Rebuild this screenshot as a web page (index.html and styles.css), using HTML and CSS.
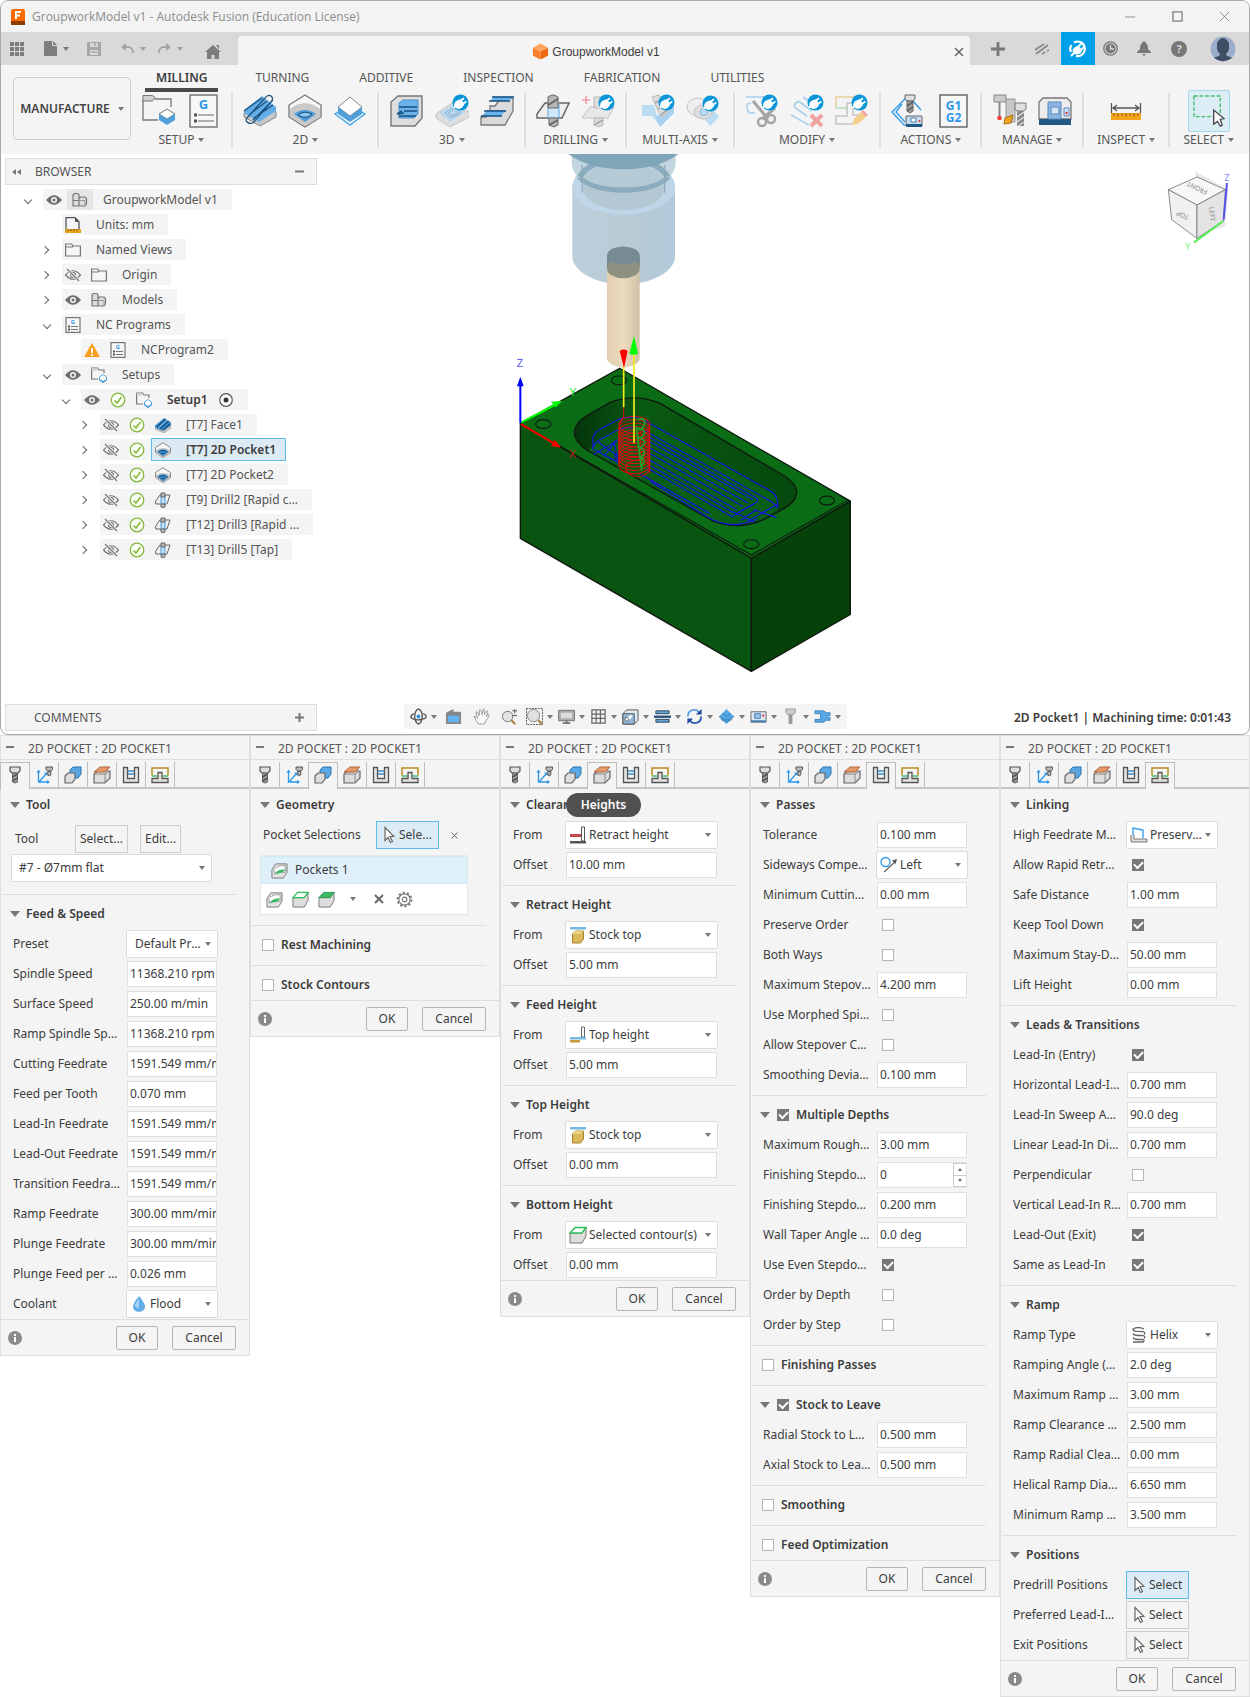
FILE: index.html
```html
<!DOCTYPE html>
<html lang="en">
<head>
<meta charset="utf-8">
<title>GroupworkModel v1 - Autodesk Fusion</title>
<link rel="stylesheet" href="styles.css">
</head>
<body>
<svg class="defs" aria-hidden="true">
  <symbol id="plug" viewBox="0 0 18 18"><circle cx="9" cy="9" r="8.500" fill="#0a96d8"/><g transform="rotate(8 9 9)"><path d="M5 8l6 6q-4 3-7 0-2-3 1-6z" fill="#fff" stroke="#fff"/><path d="M5 8q3-3 5-1.500l2.500 2.500Q14 11 11 14z" fill="#fff"/><path d="M8.500 7.500L12 4M11.500 10.500L15 7" stroke="#fff" stroke-width="1.800"/><path d="M5 13l-2.500 2.500" stroke="#fff" stroke-width="1.800"/></g></symbol>
  <symbol id="cube" viewBox="0 0 18 18"><path d="M1 5l8-4.500 8 4.500-8 4z" fill="#ffa45c"/><path d="M1 5v8.500l8 4V9z" fill="#fd7f2c"/><path d="M17 5v8.500l-8 4V9z" fill="#ee6a10"/></symbol>

  <symbol id="r-setup" viewBox="0 0 34 34"><path d="M1 6V26H16M13 5H29V13" fill="none" stroke="#777" stroke-width="1.300"/><path d="M1 1.500h9.500l2.500 2-2.500 3.500H1z" fill="#d0d0d0" stroke="#777"/><path d="M17 20l8-5 8 5-8 5z" fill="#fff" stroke="#777"/><path d="M17 20v6l8 5 8-5v-6l-8 5z" fill="#4f9fdb"/></symbol>
  <symbol id="r-gcode" viewBox="0 0 34 34"><rect x="3" y="1" width="27" height="32" fill="#f7f7f7" stroke="#666" stroke-width="1.300"/><text x="16.500" y="15" class="g-letter" text-anchor="middle" font-size="13">G</text><path d="M7 21h3M7 27h3" stroke="#555" stroke-width="3"/><path d="M11 21h16M11 27h16" stroke="#666"/></symbol>
  <symbol id="r-face" viewBox="0 0 34 34"><path d="M1 19L18 6l15 12v5L17 32 1 23z" fill="#c8c8c8" stroke="#888"/><path d="M1 16L19 2l14 11v4L16 28 1 19z" fill="#64aee8"/><path d="M4 24L22 4q3-4 6-2t0 6L10 29q-4 1-6-1t0-4M10 26L30 6M1 17L19 4M7 20L24 7M11 24L30 11" fill="none" stroke="#174f7d" stroke-width="1.200"/></symbol>
  <symbol id="r-pocket" viewBox="0 0 34 34"><path d="M17 1l16 10v12L17 33 1 23V11z" fill="#f6f6f6" stroke="#777" stroke-width="1.300"/><path d="M2 15q15-12 30 0v8L17 32 2 23z" fill="#c9c9c9"/><path d="M6 20q11-8 22 0L17 28z" fill="#4c9bd8"/><path d="M10 21q6-5 14-1-6 6-14 1z" fill="#8fc6ee" stroke="#174f7d"/></symbol>
  <symbol id="r-contour" viewBox="0 0 34 34"><path d="M2 20l15-10 15 10-15 11z" fill="none" stroke="#3a9fe8" stroke-width="1.300"/><path d="M5 13L17 3l12 10-12 9z" fill="#fff" stroke="#888"/><path d="M5 13v7l12 8 12-8v-7l-12 9z" fill="#4f9fdb"/></symbol>
  <symbol id="r-adaptive" viewBox="0 0 34 34"><path d="M1 8l7-6h24v22l-7 8H1z" fill="#dedede" stroke="#777" stroke-width="1.400"/><path d="M9 9l4-3h15v14l-4 4H9z" fill="#6ab2ea" stroke="#4c90c6"/><path d="M9 13h18M14 17h13M9 22h17M12 17l-5 3 7-1" stroke="#174f7d" stroke-width="1.500" fill="none"/></symbol>
  <symbol id="r-pocket3d" viewBox="0 0 34 34"><path d="M1 20L20 7l14 11v5L15 33 1 24z" fill="#dedede" stroke="#c2c2c2"/><path d="M4 19L20 9l11 9-16 10z" fill="#bcd8ee"/><path d="M10 19l9-6 7 6-10 5zM13 19l6-4 4 4-6 3z" fill="none" stroke="#8db4d3"/><use href="#plug" x="17" y="0" width="17" height="17"/></symbol>
  <symbol id="r-steps" viewBox="0 0 34 34"><path d="M1 31v-8h5l4-5v-6h5l6-8h12v13l-8 14z" fill="#dadada" stroke="#777" stroke-width="1.300"/><path d="M10 7L14 2.500h19L29 7zM2 22l5-6h19l-5 6z" fill="#6ab2ea"/><path d="M9 7h21M12 3h22M1 22h21M4 17h22" stroke="#174f7d" stroke-width="1.500"/></symbol>
  <symbol id="r-drill" viewBox="0 0 34 34"><path d="M9 9h24L26 24H1v-4z" fill="#eee" stroke="#666" stroke-width="1.500"/><path d="M12 9h11v15H12z" fill="#d3e8f8" stroke="#5aa9e6"/><path d="M12 3q5-4 10 0v11H12zM13 24h9v7l-4 2-5-2z" fill="#b5b5b5" stroke="#666"/><path d="M12 11l10-6M13 31l9-5" stroke="#666" stroke-width="2"/></symbol>
  <symbol id="r-hole" viewBox="0 0 34 34"><path d="M9 13h24l-6 11H1z" fill="#e8e8e8" stroke="#c2c2c2"/><path d="M5 2v8M1 6h8" stroke="#f09aa0" stroke-width="1.500"/><path d="M13 3h9v11h-9zM13 24h9v7l-4 2-5-2z" fill="#dcdcdc" stroke="#bbb"/><path d="M13 31l9-5" stroke="#aaa" stroke-width="2"/><use href="#plug" x="17" y="0" width="17" height="17"/></symbol>
  <symbol id="r-swarf" viewBox="0 0 34 34"><path d="M1 11h12l6 21-8-10H1z" fill="#bcdcf3"/><path d="M15 24l8-11h10v6L19 33z" fill="#a8d0ee"/><path d="M11 3l7-2 9 18-7 4z" fill="#ddd" stroke="#bbb"/><path d="M14 9l7-4M17 15l7-4M20 21l6-5" stroke="#aaa" stroke-width="2"/><use href="#plug" x="17" y="0" width="17" height="17"/></symbol>
  <symbol id="r-multi" viewBox="0 0 34 34"><path d="M14 20l12-6 7 9-9 9z" fill="#bcdcf3"/><ellipse cx="12" cy="13" rx="11" ry="9" fill="#eee" stroke="#c2c2c2"/><ellipse cx="17" cy="18" rx="9" ry="7" fill="#ddd" stroke="#c2c2c2"/><ellipse cx="18" cy="18" rx="4" ry="3.500" fill="#bcdcf3" stroke="#89b8d8"/><use href="#plug" x="16" y="1" width="17" height="17"/></symbol>
  <symbol id="r-trim" viewBox="0 0 34 34"><path d="M1 3h18M6 9q-5 0-4 5t4 5h4" fill="none" stroke="#a9d0ee" stroke-width="1.500"/><path d="M8 7l15 18M30 14L17 25" stroke="#a5a5a5" stroke-width="3"/><circle cx="17" cy="28" r="4" fill="none" stroke="#a5a5a5" stroke-width="2.500"/><circle cx="26" cy="25" r="4" fill="none" stroke="#a5a5a5" stroke-width="2.500"/><use href="#plug" x="16" y="0" width="17" height="17"/></symbol>
  <symbol id="r-delete" viewBox="0 0 34 34"><path d="M13 3l6 4M5 10q3-4 6-1l11 8M1 21l18 10M5 10q-2 3 2 5l10 7" fill="none" stroke="#a9d0ee" stroke-width="1.800"/><path d="M21 21l11 11M32 21L21 32" stroke="#efa3a3" stroke-width="4"/><use href="#plug" x="17" y="0" width="17" height="17"/></symbol>
  <symbol id="r-edit" viewBox="0 0 34 34"><path d="M1 14V3h18" fill="none" stroke="#e3cf9a" stroke-width="1.500"/><path d="M1 14h12" stroke="#abdcb8" stroke-width="1.500"/><path d="M12 18V9h6v12h7M1 30V22h11v-5M1 30h17" fill="none" stroke="#c5c5c5" stroke-width="1.500"/><path d="M17 31l2-6 7-7 5 5-8 7z" fill="#f5cf8a"/><path d="M26 18l2-2 5 5-2 2z" fill="#f1a3a3"/><use href="#plug" x="16" y="0" width="17" height="17"/></symbol>
  <symbol id="r-simulate" viewBox="0 0 34 34"><path d="M15 4L1 18l13 14M22 7l8 9M11 10l-6 8 9 10" fill="none" stroke="#3a9fe8" stroke-width="1.500"/><path d="M14 1h10v4l-2 2h-6l-2-2z" fill="#e0e0e0" stroke="#666"/><path d="M16 7h6v10l-3 2-3-2z" fill="#999" stroke="#666"/><path d="M16 12l6-4M16 17l6-4" stroke="#555" stroke-width="1.500"/><path d="M15 22h16v10H15z" fill="#c6d9ee" stroke="#666"/><path d="M15 30h16v3H15z" fill="#235a85"/><path d="M20 24h5v4h-5z" fill="#fff" stroke="#4780b0"/><circle cx="28.500" cy="27" r="1" fill="#d33"/></symbol>
  <symbol id="r-post" viewBox="0 0 34 34"><rect x="4" y="1" width="27" height="32" fill="#f7f7f7" stroke="#555" stroke-width="1.300"/><text x="17.500" y="16" class="g-letter" text-anchor="middle" font-size="12">G1</text><text x="17.500" y="28" class="g-letter" text-anchor="middle" font-size="12">G2</text></symbol>
  <symbol id="r-tools" viewBox="0 0 34 34"><path d="M1 1h12v7H1z" fill="#ccc" stroke="#888"/><path d="M6.500 8v14" stroke="#888" stroke-width="2"/><circle cx="6.500" cy="24" r="2.300" fill="#ee3b3b"/><path d="M13 5h9v23h-9z" fill="#c7c7c7" stroke="#999"/><path d="M12 24l8-3-2 8-7 1z" fill="#f0a31c" stroke="#a87010"/><path d="M22 9h11v6l-2 2h-7l-2-2z" fill="#ddd" stroke="#777"/><path d="M24 17h7v15h-7z" fill="#888"/><path d="M24 23l7-5M24 28l7-5M25 32l6-4" stroke="#ddd" stroke-width="1.500"/></symbol>
  <symbol id="r-machine" viewBox="0 0 34 34"><path d="M1 8l4-4h24l4 4v17H1z" fill="#ececec" stroke="#777" stroke-width="1.300"/><path d="M1 25h32v6H1z" fill="#235a85"/><path d="M10 8h13v17H10z" fill="#8db6e3" stroke="#5688bb"/><path d="M13 13h8v7h-8z" fill="#d7e4f2" stroke="#5688bb"/><path d="M26 14h5v8h-5z" fill="#cfe2ff" stroke="#5688bb"/><circle cx="28.500" cy="19" r="1.200" fill="#e33"/></symbol>
  <symbol id="r-measure" viewBox="0 0 34 34"><path d="M2.500 9v10M31.500 9v10M4 14h26M8 11l-4 3 4 3M26 11l4 3-4 3" fill="none" stroke="#555" stroke-width="1.300"/><path d="M2 19h30v7H2z" fill="#f2a51d"/><path d="M5 19v3M9 19v4M13 19v3M17 19v4M21 19v3M25 19v4M29 19v3" stroke="#8a5a08"/></symbol>
  <symbol id="r-select" viewBox="0 0 34 34"><rect x="1" y="1" width="28" height="22" fill="none" stroke="#3fbf68" stroke-width="1.500" stroke-dasharray="4 2"/><path d="M22 16v15l4-3 3 5 2-1-2-6 4-1z" fill="#fff" stroke="#444" stroke-width="1.400"/></symbol>

  <symbol id="eye" viewBox="0 0 16 16"><path d="M0 8q8-9.500 16 0-8 9.500-16 0z" fill="#6e6e6e"/><circle cx="8" cy="8" r="3" fill="#f4f4f4"/><circle cx="8" cy="8" r="1.500" fill="#6e6e6e"/></symbol>
  <symbol id="eyeoff" viewBox="0 0 16 16"><path d="M.5 8q7.500-8.500 15 0-7.500 8.500-15 0z" fill="none" stroke="#777" stroke-width="1.200"/><circle cx="8" cy="8" r="2.500" fill="none" stroke="#777" stroke-width="1.200"/><path d="M2 2l12 12" stroke="#f4f4f4" stroke-width="3"/><path d="M2 2l12 12" stroke="#777" stroke-width="1.200"/></symbol>
  <symbol id="folder" viewBox="0 0 16 16"><path d="M.6 2h6l1.500 2H15.400v10H.6zM.6 5h6.500l1-1" fill="#f6f6f6" stroke="#777" stroke-width="1.200"/></symbol>
  <symbol id="parts" viewBox="0 0 16 16"><path d="M1 3l1.500-1.500H6L7 3v5.500H1zM1 8.500h6V14H1zM7 8.500V6.500L8.500 5H13l1.500 1.500V12L13 14H7z" fill="#dcdcdc" stroke="#777" stroke-width="1.200"/><path d="M7 8.500h6v5" fill="none" stroke="#999"/></symbol>
  <symbol id="units" viewBox="0 0 16 16"><path d="M1 12V.7h9l4 4V12" fill="#f3f6fa" stroke="#555" stroke-width="1.300"/><path d="M10 .7v4h4z" fill="#444"/><path d="M0 12h16v4H0z" fill="#e3a41c"/><path d="M3 12v2M6 12v2M9 12v2M12 12v2" stroke="#7a5408"/></symbol>
  <symbol id="ncdoc" viewBox="0 0 16 16"><rect x="1" y=".6" width="14" height="14.800" fill="#f6f6f6" stroke="#777" stroke-width="1.200"/><text x="8" y="7" class="g-letter" text-anchor="middle" font-size="6">G</text><path d="M3 9.500h2M3 12.500h2" stroke="#555" stroke-width="2"/><path d="M6 9.500h7M6 12.500h7" stroke="#777"/></symbol>
  <symbol id="warn" viewBox="0 0 16 16"><path d="M8 1l8 14H0z" fill="#f99d1e"/><path d="M8 6v5M8 12v2" stroke="#fff" stroke-width="1.800"/></symbol>
  <symbol id="setupdir" viewBox="0 0 16 16"><path d="M7 12H.6V1h6l1.500 2H13v3" fill="none" stroke="#777" stroke-width="1.200"/><path d="M.6 1h5.500v2.500H.6z" fill="#ccc"/><path d="M8.500 10l3.500-2.500 3.500 2.500v3L12 15.500 8.500 13z" fill="#fff" stroke="#4f9fdb"/><path d="M8.500 12l3.500 2 3.500-2v1.500L12 16l-3.500-2.500z" fill="#4f9fdb"/></symbol>
  <symbol id="ok" viewBox="0 0 16 16"><circle cx="8" cy="8" r="6.800" fill="#fbfff5" stroke="#86b83e" stroke-width="1.300"/><path d="M4.500 8.500L7 11l4.500-6" fill="none" stroke="#86b83e" stroke-width="1.600"/></symbol>
  <symbol id="target" viewBox="0 0 16 16"><circle cx="8" cy="8" r="6.300" fill="#fff" stroke="#555" stroke-width="1.200"/><circle cx="8" cy="8" r="2.500" fill="#333"/></symbol>
  <symbol id="s-face" viewBox="0 0 16 16"><path d="M0 9.500L8 3l8 5v3l-7 5-9-4z" fill="#c4c4c4" stroke="#999" stroke-width=".6"/><path d="M0 8.500L9 1l7 4.500v3L8 14 0 10.500z" fill="#3a8ccc"/><path d="M2 10L11 2M5 12l9-8M8 13l7-6" stroke="#174f7d" stroke-width="1.200"/><path d="M3.500 10.500L12 3" stroke="#8fc6ee"/></symbol>
  <symbol id="s-pocket" viewBox="0 0 16 16"><path d="M8 .7l7.500 5v5L8 15.500.5 10.500v-5z" fill="#f8f8f8" stroke="#888"/><path d="M1 8q7-4 14 0v3l-7 4-7-4z" fill="#c2c2c2"/><path d="M2.500 9.500q5.500-4.500 11 0L8 14.500z" fill="#3a8ccc"/><path d="M3.500 10.500q4.500-4 9 0M5.500 12q2.500-2 5 0" fill="none" stroke="#174f7d"/></symbol>
  <symbol id="s-drill" viewBox="0 0 16 16"><path d="M5 3h10l-3 9H.7V9z" fill="#f2f2f2" stroke="#666"/><path d="M6 4h4v8H6z" fill="#bfe0f7" stroke="#4f9fdb"/><path d="M6 1h4v4H6zM6 12h4v3l-2 1-2-1z" fill="#b5b5b5" stroke="#666"/></symbol>

  <symbol id="t-tool" viewBox="0 0 18 18"><path d="M4 1h10v4l-2 2H6L4 5z" fill="#ddd" stroke="#555" stroke-width="1.200"/><path d="M6.500 7h5v9l-2.500 1-2.500-1z" fill="#999" stroke="#666"/><path d="M6.500 11l5-3M6.500 15l5-3" stroke="#444" stroke-width="1.300"/></symbol>
  <symbol id="t-axes" viewBox="0 0 18 18"><path d="M3.500 5v11H14M4 16L11 8" fill="none" stroke="#2b96ea" stroke-width="1.300"/><path d="M1.500 6.500l2-3 2 3zM12 14v4l3-2zM9 6.500h3.500V10z" fill="#2b96ea"/><path d="M11 1h6.500v2.500L16 5h-3.500L11 3.500zM12.800 5.500h3V9l-1.500.8-1.500-.8z" fill="#bbb" stroke="#555"/></symbol>
  <symbol id="t-geom" viewBox="0 0 18 18"><path d="M6 4l3-3h8v7l-3 4H6z" fill="#5aa9e6" stroke="#2d74ab"/><path d="M1 10l3-3h7v6l-3 4H1z" fill="#ddd" stroke="#666" stroke-width="1.200"/></symbol>
  <symbol id="t-heights" viewBox="0 0 18 18"><path d="M1 8l4-3h12v7l-5 5H1z" fill="#ddd" stroke="#666" stroke-width="1.200"/><path d="M1 8h11v9M12 8l5-3" fill="none" stroke="#888"/><path d="M1 6l6-5h10l-5 5z" fill="#e59a6c" stroke="#b4663a"/></symbol>
  <symbol id="t-passes" viewBox="0 0 18 18"><path d="M1.500 1.500h4v11h7v-11h4v15h-15z" fill="#e4e4e4" stroke="#555" stroke-width="1.300"/><path d="M6 5h6M6 8h6" stroke="#3a8ccc" stroke-width="1.300"/></symbol>
  <symbol id="t-link" viewBox="0 0 18 18"><path d="M1 9.500V2h16v7.500" fill="none" stroke="#b98b1e" stroke-width="1.500"/><path d="M1 10h5M12 10h5" stroke="#3fbf68" stroke-width="1.500"/><path d="M1 16.500v-4h6V6.500h4v6h6v4z" fill="#e4e4e4" stroke="#555" stroke-width="1.300"/></symbol>

  <symbol id="d-retract" viewBox="0 0 18 18"><path d="M1 8h11v3H1z" fill="#c4484c"/><path d="M1 15h16v2.500H1z" fill="#555"/><path d="M12.500 1h3v14h-3z" fill="#fff" stroke="#555"/></symbol>
  <symbol id="d-stock" viewBox="0 0 18 18"><path d="M1 1h16v2.500H1z" fill="#76b7e6"/><path d="M3.500 8l3-3h8v8l-3 4h-8z" fill="#d9b75a" stroke="#a6822d"/><path d="M3.500 8h8l3-3h-8z" fill="#edd486"/></symbol>
  <symbol id="d-top" viewBox="0 0 18 18"><path d="M12.500 1h3v10h-3z" fill="#fff" stroke="#666"/><path d="M1 11h16v2.500H1z" fill="#76b7e6"/><path d="M1 14h10v2.500H1z" fill="#c49a3a"/></symbol>
  <symbol id="d-contour" viewBox="0 0 18 18"><path d="M1 7h12l4-6v9l-4 7H1z" fill="#ddd" stroke="#777"/><path d="M1 7l5-5.500h11L13 7z" fill="#f8fff9" stroke="#2ebd5a" stroke-width="1.400"/></symbol>
  <symbol id="d-face" viewBox="0 0 18 18"><path d="M1 7h12l4-6v9l-4 7H1z" fill="#ddd" stroke="#777"/><path d="M1 7l5-5.500h11L13 7z" fill="#3cb963" stroke="#2b9a50"/></symbol>
  <symbol id="d-pocket" viewBox="0 0 18 18"><path d="M1 8l4-6h12v9l-4 6H1z" fill="#e2e2e2" stroke="#777"/><path d="M3 8q4-5 12-4v7q-6-2-11 2z" fill="#fff" stroke="#999"/><path d="M4 12q4-5 11-4-3 5-11 4z" fill="#3cb963"/></symbol>
  <symbol id="d-left" viewBox="0 0 18 18"><circle cx="5.500" cy="6" r="4.500" fill="none" stroke="#2b96ea" stroke-width="1.300"/><path d="M4 16L16 5" stroke="#666" stroke-width="1.300"/><path d="M17 3l-5 1.500L15.500 8z" fill="#555"/></symbol>
  <symbol id="d-drop" viewBox="0 0 18 18"><path d="M9 1q6 7 6 11a6 5 0 0 1-12 0Q3 8 9 1z" fill="#64aee8"/><path d="M9 3q-4 6-4 8 1 2 4 2z" fill="#a6d3f5"/></symbol>
  <symbol id="d-preserve" viewBox="0 0 18 18"><path d="M3 12V2l10 2v8" fill="none" stroke="#2b96ea" stroke-width="1.300"/><path d="M1 9v7h16v-3H4V9" fill="#ddd" stroke="#777"/></symbol>
  <symbol id="d-helix" viewBox="0 0 18 18"><path d="M14 3q-6-3-11 0-1 3 10 2.500 3 1 1 3M4 7.500q-3 2 9 2 3 1 1 3M4 11.500q-3 2 9 2 2 1 0 3M3 16h10" fill="none" stroke="#666" stroke-width="1.300"/></symbol>
  <symbol id="cursor" viewBox="0 0 12 18"><path d="M2 1.500v13l3-3 2.500 5 2-1-2.500-5h4z" fill="#fff" stroke="#666" stroke-width="1.200"/></symbol>
  <symbol id="info" viewBox="0 0 14 14"><circle cx="7" cy="7" r="7" fill="#8a8a8a"/><path d="M7 3v2M7 6v5" stroke="#fff" stroke-width="2"/></symbol>
</svg>

<main>
<section class="app">
  <header class="titlebar">
    <svg class="logo" viewBox="0 0 16 18"><path d="M1 3q0-2 2-2h11l1 2v14H1z" fill="#fd6a00"/><path d="M1 13h14v4H1z" fill="#8f3a00"/><path d="M6 11V4h5M6 7.500h4" fill="none" stroke="#fff" stroke-width="2"/></svg>
    <span class="wintitle">GroupworkModel v1 - Autodesk Fusion (Education License)</span>
    <span class="winbtns">
      <button type="button" aria-label="Minimize"><svg viewBox="0 0 12 12"><path d="M0 6.500h11" stroke="#888"/></svg></button>
      <button type="button" aria-label="Maximize"><svg viewBox="0 0 12 12"><rect x="1" y="1" width="10" height="10" fill="none" stroke="#777" stroke-width="1.300"/></svg></button>
      <button type="button" aria-label="Close"><svg viewBox="0 0 12 12"><path d="M1 1l10 10M11 1L1 11" stroke="#888"/></svg></button>
    </span>
  </header>

  <div class="tabbar">
    <div class="quick">
      <button type="button" aria-label="Data panel"><svg width="14" height="14" viewBox="0 0 14 14"><path d="M0 0h4v4H0zM5 0h4v4H5zM10 0h4v4h-4zM0 5h4v4H0zM5 5h4v4H5zM10 5h4v4h-4zM0 10h4v4H0zM5 10h4v4H5zM10 10h4v4h-4z" fill="#7d7d7d"/></svg></button>
      <button type="button" class="withcaret q-file" aria-label="File"><svg width="13" height="15" viewBox="0 0 13 15"><path d="M0 0h8v5h5v10H0z" fill="#7d7d7d"/><path d="M9 0l4 4H9z" fill="#7d7d7d"/></svg><i class="caret"></i></button>
      <button type="button" class="q-save" aria-label="Save"><svg width="14" height="14" viewBox="0 0 14 14"><path d="M0 0h14v14H0z" fill="#a6a6a6"/><path d="M3 1h8v4H3zM3 8h8v5H3z" fill="#d9d9d9"/><path d="M4 10h6M8 1v3" stroke="#a6a6a6" stroke-width="1.500"/></svg></button>
      <button type="button" class="withcaret dim q-undo" aria-label="Undo"><svg width="13" height="12" viewBox="0 0 13 12"><path d="M2 4h6q4 1 4 6" fill="none" stroke="#a6a6a6" stroke-width="1.800"/><path d="M5 0v8L0 4z" fill="#a6a6a6"/></svg><i class="caret"></i></button>
      <button type="button" class="withcaret dim q-redo" aria-label="Redo"><svg width="13" height="12" viewBox="0 0 13 12"><path d="M11 4H5q-4 1-4 6" fill="none" stroke="#a6a6a6" stroke-width="1.800"/><path d="M8 0v8l5-4z" fill="#a6a6a6"/></svg><i class="caret"></i></button>
      <button type="button" class="q-home" aria-label="Home"><svg width="16" height="14" viewBox="0 0 16 14"><path d="M8 0l8 7h-2v7H9.500v-4h-3v4H2V7H0zM11 0h3v4z" fill="#7d7d7d"/></svg></button>
    </div>
    <div class="doctab"><span class="docname"><svg width="17" height="17"><use href="#cube"/></svg>GroupworkModel v1</span><button type="button" aria-label="Close tab"><svg width="10" height="10" viewBox="0 0 10 10"><path d="M1 1l8 8M9 1L1 9" stroke="#666" stroke-width="1.500"/></svg></button></div>
    <div class="account">
      <button type="button" aria-label="New tab"><svg width="14" height="14" viewBox="0 0 14 14"><path d="M7 0v14M0 7h14" stroke="#777" stroke-width="2.800"/></svg></button>
      <button type="button" class="a-ext" aria-label="Extensions"><svg width="16" height="12" viewBox="0 0 16 12"><path d="M1 7l9-6M2 11L14 2M8 11l3-2M13 8l2-1" stroke="#888" stroke-width="1.600"/></svg></button>
      <button type="button" class="a-plug" aria-label="Manage extensions"><svg width="18" height="18" viewBox="0 0 18 18"><path d="M5 2.500A7.300 7.300 0 1 1 7 16M2 12A7 7 0 0 1 2.500 5" fill="none" stroke="#fff" stroke-width="2.200"/><path d="M5 8q3-3 5-1.500l2.500 2.500Q14 11 11 13.500q-4 2-6.500 0-2-3 .5-5.500z" fill="#fff"/><path d="M8.500 7.500L12 4M11.500 10.500L15 7M5 13l-3 3" stroke="#fff" stroke-width="1.800"/></svg></button>
      <button type="button" class="a-clock" aria-label="Job status"><svg width="15" height="15" viewBox="0 0 15 15"><circle cx="7.500" cy="7.500" r="6.700" fill="none" stroke="#777" stroke-width="1.300"/><circle cx="7.500" cy="7.500" r="5" fill="#777"/><path d="M7.500 4v4H11" fill="none" stroke="#d9d9d9" stroke-width="1.400"/></svg></button>
      <button type="button" class="a-bell" aria-label="Notifications"><svg width="14" height="15" viewBox="0 0 14 15"><path d="M7 0l1.500 1.500Q11 3 11 8l3 3v1H0v-1l3-3q0-5 2.500-6.500zM5 13h4l-2 2z" fill="#777"/></svg></button>
      <button type="button" class="a-help" aria-label="Help"><svg width="16" height="16" viewBox="0 0 16 16"><circle cx="8" cy="8" r="8" fill="#777"/><text x="8" y="12" text-anchor="middle" font-size="11" font-weight="700" fill="#d9d9d9">?</text></svg></button>
      <button type="button" class="a-user" aria-label="Account"><svg width="26" height="26" viewBox="0 0 26 26"><circle cx="13" cy="13" r="12.500" fill="#9aaecb"/><path d="M7 7q6-10 12 0v6q-1 4-3 5l1 2q4 1 5 2-9 6.500-18 0 1-1 5-2l1-2q-2-1-3-5z" fill="#3f4f66"/></svg></button>
    </div>
  </div>

  <div class="ribbon">
    <button type="button" class="workspace">MANUFACTURE<i class="caret"></i></button>
    <div class="ribbonmain">
      <nav class="modes"><a href="#" class="on">MILLING</a><a href="#">TURNING</a><a href="#">ADDITIVE</a><a href="#">INSPECTION</a><a href="#">FABRICATION</a><a href="#">UTILITIES</a></nav>
      <div class="groups">
        <div class="group first"><div class="icons"><svg><use href="#r-setup"/></svg><svg><use href="#r-gcode"/></svg></div><button type="button">SETUP<i class="caret"></i></button></div>
        <div class="group"><div class="icons"><svg><use href="#r-face"/></svg><svg><use href="#r-pocket"/></svg><svg><use href="#r-contour"/></svg></div><button type="button">2D<i class="caret"></i></button></div>
        <div class="group"><div class="icons"><svg><use href="#r-adaptive"/></svg><svg><use href="#r-pocket3d"/></svg><svg><use href="#r-steps"/></svg></div><button type="button">3D<i class="caret"></i></button></div>
        <div class="group"><div class="icons"><svg><use href="#r-drill"/></svg><svg><use href="#r-hole"/></svg></div><button type="button">DRILLING<i class="caret"></i></button></div>
        <div class="group wide"><div class="icons"><svg><use href="#r-swarf"/></svg><svg><use href="#r-multi"/></svg></div><button type="button">MULTI-AXIS<i class="caret"></i></button></div>
        <div class="group"><div class="icons"><svg><use href="#r-trim"/></svg><svg><use href="#r-delete"/></svg><svg><use href="#r-edit"/></svg></div><button type="button">MODIFY<i class="caret"></i></button></div>
        <div class="group"><div class="icons"><svg><use href="#r-simulate"/></svg><svg><use href="#r-post"/></svg></div><button type="button">ACTIONS<i class="caret"></i></button></div>
        <div class="group"><div class="icons"><svg><use href="#r-tools"/></svg><svg><use href="#r-machine"/></svg></div><button type="button">MANAGE<i class="caret"></i></button></div>
        <div class="group wide"><div class="icons"><svg><use href="#r-measure"/></svg></div><button type="button">INSPECT<i class="caret"></i></button></div>
        <div class="group wide"><div class="icons"><span class="picked"><svg><use href="#r-select"/></svg></span></div><button type="button">SELECT<i class="caret"></i></button></div>
      </div>
    </div>
  </div>

  <div class="canvas">
    <div class="stage">
      <aside class="browser">
        <div class="bar"><svg width="10" height="8" viewBox="0 0 10 8"><path d="M4 1v6L0 4zM9 1v6L5 4z" fill="#777"/></svg><span>BROWSER</span><button type="button" aria-label="Collapse"><svg width="9" height="9" viewBox="0 0 9 9"><path d="M0 4.500h9" stroke="#777" stroke-width="2"/></svg></button></div>
        <ul class="tree">
          <li class="l0"><i class="chev down"></i><span class="node"><svg><use href="#eye"/></svg><span class="hot"><svg><use href="#parts"/></svg></span><b>GroupworkModel v1</b></span></li>
          <li class="l1"><i class="chev none"></i><span class="node"><svg><use href="#units"/></svg><b>Units: mm</b></span></li>
          <li class="l1"><i class="chev"></i><span class="node"><svg><use href="#folder"/></svg><b>Named Views</b></span></li>
          <li class="l1"><i class="chev"></i><span class="node"><svg><use href="#eyeoff"/></svg><svg><use href="#folder"/></svg><b>Origin</b></span></li>
          <li class="l1"><i class="chev"></i><span class="node"><svg><use href="#eye"/></svg><svg><use href="#parts"/></svg><b>Models</b></span></li>
          <li class="l1"><i class="chev down"></i><span class="node"><svg><use href="#ncdoc"/></svg><b>NC Programs</b></span></li>
          <li class="l2"><i class="chev none"></i><span class="node"><svg><use href="#warn"/></svg><svg><use href="#ncdoc"/></svg><b>NCProgram2</b></span></li>
          <li class="l1"><i class="chev down"></i><span class="node"><svg><use href="#eye"/></svg><svg><use href="#setupdir"/></svg><b>Setups</b></span></li>
          <li class="l2"><i class="chev down"></i><span class="node"><svg><use href="#eye"/></svg><svg><use href="#ok"/></svg><svg><use href="#setupdir"/></svg><b class="strong">Setup1</b><svg><use href="#target"/></svg></span></li>
          <li class="l3"><i class="chev"></i><span class="node"><svg><use href="#eyeoff"/></svg><svg><use href="#ok"/></svg><svg><use href="#s-face"/></svg><b>[T7] Face1</b></span></li>
          <li class="l3"><i class="chev"></i><span class="node"><svg><use href="#eyeoff"/></svg><svg><use href="#ok"/></svg><span class="selected"><svg><use href="#s-pocket"/></svg><b class="strong">[T7] 2D Pocket1</b></span></span></li>
          <li class="l3"><i class="chev"></i><span class="node"><svg><use href="#eyeoff"/></svg><svg><use href="#ok"/></svg><svg><use href="#s-pocket"/></svg><b>[T7] 2D Pocket2</b></span></li>
          <li class="l3"><i class="chev"></i><span class="node"><svg><use href="#eyeoff"/></svg><svg><use href="#ok"/></svg><svg><use href="#s-drill"/></svg><b>[T9] Drill2 [Rapid c...</b></span></li>
          <li class="l3"><i class="chev"></i><span class="node"><svg><use href="#eyeoff"/></svg><svg><use href="#ok"/></svg><svg><use href="#s-drill"/></svg><b>[T12] Drill3 [Rapid ...</b></span></li>
          <li class="l3"><i class="chev"></i><span class="node"><svg><use href="#eyeoff"/></svg><svg><use href="#ok"/></svg><svg><use href="#s-drill"/></svg><b>[T13] Drill5 [Tap]</b></span></li>
        </ul>
      </aside>

      <svg class="scene" viewBox="47 12 1011 1566" role="img" aria-label="Toolpath on the green block">
        <defs>
          <linearGradient id="gShank" x1="0" x2="1" y1="0" y2="0"><stop offset="0" stop-color="#e2cfb2"/><stop offset=".5" stop-color="#ebdabc"/><stop offset="1" stop-color="#cfc0a8"/></linearGradient>
          <linearGradient id="gHolder" x1="0" x2="1" y1="0" y2="0"><stop offset="0" stop-color="#bccfda"/><stop offset=".6" stop-color="#b9cad5"/><stop offset="1" stop-color="#b0cadb"/></linearGradient>
          <linearGradient id="gWall" x1="0" x2="1" y1="0" y2="0"><stop offset="0" stop-color="#04350a"/><stop offset=".3" stop-color="#0a5a13"/><stop offset="1" stop-color="#06480d"/></linearGradient>
        </defs>
        <g transform="scale(1 1.015)">
        <path d="M216 110v203a154 84 0 0 0 308 0V110z" fill="url(#gHolder)"/>
        <ellipse cx="370" cy="108" rx="154" ry="84" fill="#bed6e8"/>
        <ellipse cx="370" cy="108" rx="125" ry="70" fill="#b4c8d3"/>
        <path d="M214 12v26a156 88 0 0 0 312 0V12z" fill="#b4cad6" opacity=".8"/>
        <path d="M230 84q44 42 140 42t140-42l-16-6q-30 32-124 32t-124-32z" fill="#8aacbc"/>
        <path d="M230 78q30-57 140-57t140 57l-18 2q-30-44-122-44T248 80z" fill="#8aacbc"/>
        <path d="M204 12h330q-60 45-164 45T204 12z" fill="#7fa5b8"/>
        <path d="M245 44v82M493 44v82" stroke="#8aa5b2" stroke-width="3"/>
        <path d="M320 312v303a49 27 0 0 0 98 0V312z" fill="url(#gShank)"/>
        <path d="M320 312v40a49 27 0 0 0 98 0v-40z" fill="#8e917f"/>
        <path d="M320 312v34q10-24 49-24t49 24v-34z" fill="#748890"/>
        <ellipse cx="369" cy="312" rx="49" ry="27" fill="#768b94"/>

        <g stroke="#101810" stroke-width="4" stroke-linejoin="round">
          <path d="M60 808L753 1206v335L60 1148z" fill="#085410"/>
          <path d="M753 1206l297-168v335l-297 168z" fill="#054109"/>
          <path d="M60 808L358 645l692 393-297 168z" fill="#0a6d15"/>
          <path d="M66 812L753 1197l290-162" fill="none" stroke-width="3"/>
          <g fill="none" stroke-width="3.500"><ellipse cx="356" cy="681" rx="23" ry="13"/><ellipse cx="129" cy="810" rx="23" ry="13"/><ellipse cx="980" cy="1036" rx="23" ry="13"/><ellipse cx="753" cy="1165" rx="23" ry="13"/></g>
          <path d="M330 746Q400 718 478 748L850 962Q892 988 889 1014 886 1040 850 1060L796 1090Q716 1126 640 1098L262 888Q222 862 222 834 224 806 260 785z" fill="url(#gWall)"/>
        </g>
        <path d="M266 888l376 208q74 26 150-8l38-24 0-40-374-212q-50-20-100 10l-70 38z" fill="#0a5f14"/>
        <g fill="none" stroke="#1414e0" stroke-width="3.500">
          <path d="M278 890v-40q4-16 24-26l54-28q40-14 78 4l380 210q20 12 18 50"/>
          <path d="M278 880q4-16 24-26l54-28q40-14 78 4l380 210q12 8 16 16"/>
          <path d="M448 850l322 180q6 6-6 14l-50 28M448 862l310 172M448 880l296 164M448 896l280 158M448 916l262 148M448 932l252 140M350 916q-14-10 0-20"/>
          <path d="M440 940l260 146M420 958l208 116M450 980l180 110q70 34 140 0"/>
          <path d="M280 900l70-40M290 860l64 46M284 886l70 38M340 860l14 60M350 856l-40 50M720 1096l50-34M700 1080l60-34M740 1098l90-50M760 1064l68 22M700 1070l66 30"/>
        </g>
        <g fill="none" stroke="#e00c14" stroke-width="3">
          <path d="M370 760v26l-12 24M356 815v110M448 815v140"/>
          <ellipse cx="402" cy="812" rx="46" ry="25"/><ellipse cx="402" cy="822" rx="46" ry="25"/><ellipse cx="402" cy="832" rx="46" ry="25"/><ellipse cx="402" cy="842" rx="46" ry="25"/><ellipse cx="402" cy="852" rx="46" ry="25"/><ellipse cx="402" cy="862" rx="46" ry="25"/><ellipse cx="402" cy="872" rx="46" ry="25"/><ellipse cx="402" cy="882" rx="46" ry="25"/><ellipse cx="402" cy="892" rx="46" ry="25"/><ellipse cx="402" cy="902" rx="46" ry="25"/><ellipse cx="402" cy="912" rx="46" ry="25"/><ellipse cx="402" cy="922" rx="46" ry="25"/><ellipse cx="402" cy="932" rx="46" ry="25"/><ellipse cx="412" cy="941" rx="36" ry="24"/>
        </g>
        <path d="M408 796Q440 790 432 812T410 822Q440 826 430 842T414 850Q440 856 430 870T416 880Q438 886 430 900T420 910Q436 916 428 928T424 944L408 820 418 900" fill="none" stroke="#1da32b" stroke-width="5"/>
        <path d="M370 640v120M401 600v266" stroke="#f0ec1c" stroke-width="5"/>
        <path d="M358 594q12-8 24 0l-11 50z" fill="#f00"/><path d="M387 602q13 6 26 0l-12-52z" fill="#0f0"/>
        <path d="M62 806L170 750" stroke="#0f0" stroke-width="6"/><path d="M152 744l34-2-20 18z" fill="#0f0"/>
        <path d="M60 806V690" stroke="#00f" stroke-width="6"/><path d="M60 670l-10 28h20z" fill="#00f"/>
        <path d="M62 810l104 60" stroke="#f00" stroke-width="6"/><path d="M182 880l-30-5 12-18z" fill="#f00"/>
        </g>
        <g class="axis"><text x="49" y="650" fill="#5b5bf0">Z</text><text x="208" y="738" fill="#2fe52f">Y</text><text x="207" y="924" fill="#b32020">X</text></g>
      </svg>

      <svg class="viewcube" viewBox="1065 505 210 255" role="img" aria-label="View cube">
        <path d="M1155 515l100 55-10 110-60 20z" fill="#ddd" opacity=".7"/>
        <g stroke="#777" stroke-width="2.500"><path d="M1075 570l86-38 85 38-85 46z" fill="#f7f7f7"/><path d="M1075 570l86 46v100l-76-56z" fill="#f0f0f0"/><path d="M1246 570l-85 46v100l79-52z" fill="#e4e4e4"/></g>
        <path d="M1251 550l-10 110" stroke="#5454ee" stroke-width="6"/><path d="M1240 664l-88 64" stroke="#55ee55" stroke-width="6"/>
        <g class="cubetext"><text x="1162" y="570" transform="rotate(205 1162 564)">FRONT</text><text x="1118" y="650" transform="rotate(205 1118 645)">TOP</text><text x="1204" y="648" transform="rotate(85 1204 643)">LEFT</text></g>
        <g class="cubeaxis"><text x="1243" y="545" fill="#8a8af4">Z</text><text x="1125" y="752" fill="#7df07d">Y</text></g>
      </svg>
    </div>

    <div class="dock">
      <div class="bar comments"><span>COMMENTS</span><button type="button" aria-label="Expand comments"><svg width="9" height="9" viewBox="0 0 9 9"><path d="M0 4.500h9M4.500 0v9" stroke="#777" stroke-width="2"/></svg></button></div>
      <div class="navbar">
        <button type="button" aria-label="Orbit"><svg viewBox="0 0 18 18"><path d="M9 1q4 2 4 8t-4 8q-4-2-4-8t4-8M4 6q-5 3-2 5 6 3 14 0 3-3-2-5" fill="none" stroke="#555" stroke-width="1.400"/><circle cx="9" cy="9" r="2" fill="#2b96ea"/></svg><i class="caret"></i></button>
        <button type="button" aria-label="Look at"><svg viewBox="0 0 18 18"><path d="M1 5l8-4v3h8v13H1z" fill="#888"/><path d="M3 8h12v7H3z" fill="#64b2ee"/></svg></button>
        <button type="button" aria-label="Pan"><svg viewBox="0 0 18 18"><path d="M5 16L1 9q2-1 4 2L3 4q2-1 3.500 4L7 2q2-1 2.500 5L11 1q2 0 1 6l3-4q2 0-1 6l3-2q1 1-3 6l-2 4H7z" fill="#f8f8f8" stroke="#999"/></svg></button>
        <button type="button" aria-label="Zoom"><svg viewBox="0 0 18 18"><circle cx="7" cy="9" r="5.500" fill="#e4e4e4" stroke="#777"/><path d="M11 13l4 4" stroke="#a57430" stroke-width="2"/><path d="M12 3h5M14.500 1v5M12 8h5" stroke="#555"/></svg></button>
        <button type="button" aria-label="Fit"><svg viewBox="0 0 18 18"><path d="M.5.5h17v17H.5z" fill="none" stroke="#555" stroke-dasharray="2 1"/><circle cx="8" cy="8" r="6.500" fill="#e0e0e0" stroke="#888"/><path d="M13 13l4 4" stroke="#a57430" stroke-width="2"/></svg><i class="caret"></i></button>
        <button type="button" aria-label="Display settings"><svg viewBox="0 0 18 18"><path d="M.5 2.500h17v11H.5z" fill="#aaa" stroke="#777"/><path d="M3 5h12v6H3z" fill="#ddd"/><path d="M5 16h8M9 13v3" stroke="#777" stroke-width="2"/></svg><i class="caret"></i></button>
        <button type="button" aria-label="Grid"><svg viewBox="0 0 18 18"><path d="M2 2h14v14H2zM2 6.500h14M2 11h14M6.500 2v14M11 2v14" fill="none" stroke="#666" stroke-width="1.300"/></svg><i class="caret"></i></button>
        <button type="button" aria-label="Visual style"><svg viewBox="0 0 18 18"><path d="M1 6l4-4h12v11l-4 4H1z" fill="#dfe9f2" stroke="#555"/><path d="M1 6h12v11H1z" fill="#8fb8dc" stroke="#555"/><circle cx="5" cy="12" r="2" fill="#fff" stroke="#555"/><path d="M7 11l3-3" stroke="#fff" stroke-width="3"/></svg><i class="caret"></i></button>
        <button type="button" aria-label="Stock"><svg viewBox="0 0 18 18"><path d="M2 3h14v3H2zM2 12h14v3H2z" fill="#64a6dc" stroke="#345"/><path d="M0 8h18v2.500H0z" fill="#28507c"/></svg><i class="caret"></i></button>
        <button type="button" aria-label="Regenerate"><svg viewBox="0 0 18 18"><path d="M2 9q0-7 7-7 3 0 5 3" fill="none" stroke="#5a9fe0" stroke-width="2"/><path d="M16 9q0 7-7 7-3 0-5-3" fill="none" stroke="#2c5fae" stroke-width="2"/><path d="M16.500 1v6h-6zM1.500 17v-6h6z" fill="#20489a"/></svg><i class="caret"></i></button>
        <button type="button" aria-label="Toolpath"><svg viewBox="0 0 18 18"><path d="M9 1l8 8-8 8-8-8z" fill="#5aa9e6"/><path d="M1 9l8 4 8-4M3 12l6 3 6-3M5 6l4 3 4-3" fill="none" stroke="#2d80bb"/></svg><i class="caret"></i></button>
        <button type="button" aria-label="Machine"><svg viewBox="0 0 18 18"><path d="M1 4h16v11H1z" fill="#dde8f4" stroke="#666"/><path d="M1 13h16v2H1z" fill="#4780b0"/><path d="M5 6h6v5H5z" fill="#9bc3ec" stroke="#4780b0"/><circle cx="14" cy="8" r="1.200" fill="#e33"/></svg><i class="caret"></i></button>
        <button type="button" aria-label="Tool"><svg viewBox="0 0 18 18"><path d="M4 1h10v4l-2 2H6L4 5z" fill="#ccc" stroke="#999"/><path d="M7 7h4v10H7z" fill="#999"/></svg><i class="caret"></i></button>
        <button type="button" aria-label="Fixture"><svg viewBox="0 0 18 18"><path d="M1 3h9l3 2h4v3h-3v2h3v3h-4l-3 2H1v-3h6V6H1z" fill="#5aa9e6" stroke="#3d86bd"/></svg><i class="caret"></i></button>
      </div>
      <p class="status">2D Pocket1 | Machining time: 0:01:43</p>
    </div>
  </div>
</section>

<div class="panels">
  <form class="panel">
    <h2>2D POCKET : 2D POCKET1</h2>
    <div class="tabs"><button type="button" class="on" aria-label="Tool"><svg><use href="#t-tool"/></svg></button><button type="button" aria-label="Orientation"><svg><use href="#t-axes"/></svg></button><button type="button" aria-label="Geometry"><svg><use href="#t-geom"/></svg></button><button type="button" aria-label="Heights"><svg><use href="#t-heights"/></svg></button><button type="button" aria-label="Passes"><svg><use href="#t-passes"/></svg></button><button type="button" aria-label="Linking"><svg><use href="#t-link"/></svg></button></div>
    <section>
      <h3 class="open">Tool</h3>
      <div class="toolrow"><span>Tool</span><button type="button" class="btn">Select...</button><button type="button" class="btn">Edit...</button></div>
      <div class="toolpick"><span class="combo"><select aria-label="Tool"><option>#7 - Ø7mm flat</option></select></span></div>
    </section>
    <section>
      <h3 class="open">Feed &amp; Speed</h3>
      <label class="row"><span>Preset</span><span class="combo pad"><select><option>Default Preset</option></select></span></label>
      <label class="row"><span>Spindle Speed</span><input type="text" value="11368.210 rpm"></label>
      <label class="row"><span>Surface Speed</span><input type="text" value="250.00 m/min"></label>
      <label class="row"><span>Ramp Spindle Speed</span><input type="text" value="11368.210 rpm"></label>
      <label class="row"><span>Cutting Feedrate</span><input type="text" value="1591.549 mm/min"></label>
      <label class="row"><span>Feed per Tooth</span><input type="text" value="0.070 mm"></label>
      <label class="row"><span>Lead-In Feedrate</span><input type="text" value="1591.549 mm/min"></label>
      <label class="row"><span>Lead-Out Feedrate</span><input type="text" value="1591.549 mm/min"></label>
      <label class="row"><span>Transition Feedrate</span><input type="text" value="1591.549 mm/min"></label>
      <label class="row"><span>Ramp Feedrate</span><input type="text" value="300.00 mm/min"></label>
      <label class="row"><span>Plunge Feedrate</span><input type="text" value="300.00 mm/min"></label>
      <label class="row"><span>Plunge Feed per Revolution</span><input type="text" value="0.026 mm"></label>
      <label class="row"><span>Coolant</span><span class="combo"><svg><use href="#d-drop"/></svg><select><option>Flood</option></select></span></label>
    </section>
    <footer><svg><use href="#info"/></svg><button type="button">OK</button><button type="button" class="cancel">Cancel</button></footer>
  </form>

  <form class="panel">
    <h2>2D POCKET : 2D POCKET1</h2>
    <div class="tabs"><button type="button" aria-label="Tool"><svg><use href="#t-tool"/></svg></button><button type="button" aria-label="Orientation"><svg><use href="#t-axes"/></svg></button><button type="button" class="on" aria-label="Geometry"><svg><use href="#t-geom"/></svg></button><button type="button" aria-label="Heights"><svg><use href="#t-heights"/></svg></button><button type="button" aria-label="Passes"><svg><use href="#t-passes"/></svg></button><button type="button" aria-label="Linking"><svg><use href="#t-link"/></svg></button></div>
    <section>
      <h3 class="open">Geometry</h3>
      <div class="row"><span>Pocket Selections</span><span class="pickline"><button type="button" class="btn pick on"><svg><use href="#cursor"/></svg>Sele...</button><button type="button" class="clear" aria-label="Clear"><svg width="7" height="7" viewBox="0 0 7 7"><path d="M.5.5l6 6M6.500.5l-6 6" stroke="#666"/></svg></button></span></div>
      <div class="list">
        <div class="item"><svg><use href="#d-pocket"/></svg>Pockets 1</div>
        <div class="tools"><svg><use href="#d-pocket"/></svg><svg><use href="#d-contour"/></svg><svg><use href="#d-face"/></svg><i class="caret"></i><svg class="x" viewBox="0 0 10 10"><path d="M1 1l8 8M9 1L1 9" stroke="#666" stroke-width="2"/></svg><svg viewBox="0 0 18 18"><circle cx="9" cy="9" r="6" fill="none" stroke="#777" stroke-width="1.200"/><circle cx="9" cy="9" r="7.300" fill="none" stroke="#777" stroke-width="2" stroke-dasharray="2.300 2.300"/><circle cx="9" cy="9" r="2.500" fill="none" stroke="#777" stroke-width="1.200"/></svg></div>
      </div>
    </section>
    <section><h3><label><input type="checkbox">Rest Machining</label></h3></section>
    <section><h3><label><input type="checkbox">Stock Contours</label></h3></section>
    <footer><svg><use href="#info"/></svg><button type="button">OK</button><button type="button" class="cancel">Cancel</button></footer>
  </form>

  <form class="panel heights">
    <h2>2D POCKET : 2D POCKET1</h2>
    <div class="tabs"><button type="button" aria-label="Tool"><svg><use href="#t-tool"/></svg></button><button type="button" aria-label="Orientation"><svg><use href="#t-axes"/></svg></button><button type="button" aria-label="Geometry"><svg><use href="#t-geom"/></svg></button><button type="button" class="on" aria-label="Heights"><svg><use href="#t-heights"/></svg></button><button type="button" aria-label="Passes"><svg><use href="#t-passes"/></svg></button><button type="button" aria-label="Linking"><svg><use href="#t-link"/></svg></button></div>
    <section>
      <h3 class="open covered"><span>Clearance Height</span><span class="tooltip" role="tooltip">Heights</span></h3>
      <label class="row"><span>From</span><span class="combo"><svg><use href="#d-retract"/></svg><select><option>Retract height</option></select></span></label>
      <label class="row"><span>Offset</span><input type="text" value="10.00 mm"></label>
    </section>
    <section>
      <h3 class="open">Retract Height</h3>
      <label class="row"><span>From</span><span class="combo"><svg><use href="#d-stock"/></svg><select><option>Stock top</option></select></span></label>
      <label class="row"><span>Offset</span><input type="text" value="5.00 mm"></label>
    </section>
    <section>
      <h3 class="open">Feed Height</h3>
      <label class="row"><span>From</span><span class="combo"><svg><use href="#d-top"/></svg><select><option>Top height</option></select></span></label>
      <label class="row"><span>Offset</span><input type="text" value="5.00 mm"></label>
    </section>
    <section>
      <h3 class="open">Top Height</h3>
      <label class="row"><span>From</span><span class="combo"><svg><use href="#d-stock"/></svg><select><option>Stock top</option></select></span></label>
      <label class="row"><span>Offset</span><input type="text" value="0.00 mm"></label>
    </section>
    <section>
      <h3 class="open">Bottom Height</h3>
      <label class="row"><span>From</span><span class="combo"><svg><use href="#d-contour"/></svg><select><option>Selected contour(s)</option></select></span></label>
      <label class="row"><span>Offset</span><input type="text" value="0.00 mm"></label>
    </section>
    <footer><svg><use href="#info"/></svg><button type="button">OK</button><button type="button" class="cancel">Cancel</button></footer>
  </form>

  <form class="panel">
    <h2>2D POCKET : 2D POCKET1</h2>
    <div class="tabs"><button type="button" aria-label="Tool"><svg><use href="#t-tool"/></svg></button><button type="button" aria-label="Orientation"><svg><use href="#t-axes"/></svg></button><button type="button" aria-label="Geometry"><svg><use href="#t-geom"/></svg></button><button type="button" aria-label="Heights"><svg><use href="#t-heights"/></svg></button><button type="button" class="on" aria-label="Passes"><svg><use href="#t-passes"/></svg></button><button type="button" aria-label="Linking"><svg><use href="#t-link"/></svg></button></div>
    <section>
      <h3 class="open">Passes</h3>
      <label class="row"><span>Tolerance</span><input type="text" value="0.100 mm"></label>
      <label class="row"><span>Sideways Compensation</span><span class="combo"><svg><use href="#d-left"/></svg><select><option>Left</option></select></span></label>
      <label class="row"><span>Minimum Cutting Radius</span><input type="text" value="0.00 mm"></label>
      <label class="row"><span>Preserve Order</span><input type="checkbox"></label>
      <label class="row"><span>Both Ways</span><input type="checkbox"></label>
      <label class="row"><span>Maximum Stepover</span><input type="text" value="4.200 mm"></label>
      <label class="row"><span>Use Morphed Spiral Machining</span><input type="checkbox"></label>
      <label class="row"><span>Allow Stepover Cusps</span><input type="checkbox"></label>
      <label class="row"><span>Smoothing Deviation</span><input type="text" value="0.100 mm"></label>
    </section>
    <section>
      <h3 class="open"><label><input type="checkbox" checked>Multiple Depths</label></h3>
      <label class="row"><span>Maximum Roughing Stepdown</span><input type="text" value="3.00 mm"></label>
      <div class="row"><label for="stepdowns">Finishing Stepdowns</label><span class="spin"><input type="text" id="stepdowns" value="0"><span class="arrows"><button type="button" aria-label="More"><i class="up"></i></button><button type="button" aria-label="Fewer"><i class="dn"></i></button></span></span></div>
      <label class="row"><span>Finishing Stepdown</span><input type="text" value="0.200 mm"></label>
      <label class="row"><span>Wall Taper Angle (deg)</span><input type="text" value="0.0 deg"></label>
      <label class="row"><span>Use Even Stepdowns</span><input type="checkbox" checked></label>
      <label class="row"><span>Order by Depth</span><input type="checkbox"></label>
      <label class="row"><span>Order by Step</span><input type="checkbox"></label>
    </section>
    <section><h3><label><input type="checkbox">Finishing Passes</label></h3></section>
    <section>
      <h3 class="open"><label><input type="checkbox" checked>Stock to Leave</label></h3>
      <label class="row"><span>Radial Stock to Leave</span><input type="text" value="0.500 mm"></label>
      <label class="row"><span>Axial Stock to Leave</span><input type="text" value="0.500 mm"></label>
    </section>
    <section><h3><label><input type="checkbox">Smoothing</label></h3></section>
    <section><h3><label><input type="checkbox">Feed Optimization</label></h3></section>
    <footer><svg><use href="#info"/></svg><button type="button">OK</button><button type="button" class="cancel">Cancel</button></footer>
  </form>

  <form class="panel">
    <h2>2D POCKET : 2D POCKET1</h2>
    <div class="tabs"><button type="button" aria-label="Tool"><svg><use href="#t-tool"/></svg></button><button type="button" aria-label="Orientation"><svg><use href="#t-axes"/></svg></button><button type="button" aria-label="Geometry"><svg><use href="#t-geom"/></svg></button><button type="button" aria-label="Heights"><svg><use href="#t-heights"/></svg></button><button type="button" aria-label="Passes"><svg><use href="#t-passes"/></svg></button><button type="button" class="on" aria-label="Linking"><svg><use href="#t-link"/></svg></button></div>
    <section>
      <h3 class="open">Linking</h3>
      <label class="row"><span>High Feedrate Mode</span><span class="combo"><svg><use href="#d-preserve"/></svg><select><option>Preserve rapid movement</option></select></span></label>
      <label class="row"><span>Allow Rapid Retract</span><input type="checkbox" checked></label>
      <label class="row"><span>Safe Distance</span><input type="text" value="1.00 mm"></label>
      <label class="row"><span>Keep Tool Down</span><input type="checkbox" checked></label>
      <label class="row"><span>Maximum Stay-Down Distance</span><input type="text" value="50.00 mm"></label>
      <label class="row"><span>Lift Height</span><input type="text" value="0.00 mm"></label>
    </section>
    <section>
      <h3 class="open">Leads &amp; Transitions</h3>
      <label class="row"><span>Lead-In (Entry)</span><input type="checkbox" checked></label>
      <label class="row"><span>Horizontal Lead-In Radius</span><input type="text" value="0.700 mm"></label>
      <label class="row"><span>Lead-In Sweep Angle</span><input type="text" value="90.0 deg"></label>
      <label class="row"><span>Linear Lead-In Distance</span><input type="text" value="0.700 mm"></label>
      <label class="row"><span>Perpendicular</span><input type="checkbox"></label>
      <label class="row"><span>Vertical Lead-In Radius</span><input type="text" value="0.700 mm"></label>
      <label class="row"><span>Lead-Out (Exit)</span><input type="checkbox" checked></label>
      <label class="row"><span>Same as Lead-In</span><input type="checkbox" checked></label>
    </section>
    <section>
      <h3 class="open">Ramp</h3>
      <label class="row"><span>Ramp Type</span><span class="combo"><svg><use href="#d-helix"/></svg><select><option>Helix</option></select></span></label>
      <label class="row"><span>Ramping Angle (deg)</span><input type="text" value="2.0 deg"></label>
      <label class="row"><span>Maximum Ramp Stepdown</span><input type="text" value="3.00 mm"></label>
      <label class="row"><span>Ramp Clearance Height</span><input type="text" value="2.500 mm"></label>
      <label class="row"><span>Ramp Radial Clearance</span><input type="text" value="0.00 mm"></label>
      <label class="row"><span>Helical Ramp Diameter</span><input type="text" value="6.650 mm"></label>
      <label class="row"><span>Minimum Ramp Diameter</span><input type="text" value="3.500 mm"></label>
    </section>
    <section>
      <h3 class="open">Positions</h3>
      <div class="row"><span>Predrill Positions</span><button type="button" class="btn pick on"><svg><use href="#cursor"/></svg>Select</button></div>
      <div class="row"><span>Preferred Lead-In Positions</span><button type="button" class="btn pick"><svg><use href="#cursor"/></svg>Select</button></div>
      <div class="row"><span>Exit Positions</span><button type="button" class="btn pick"><svg><use href="#cursor"/></svg>Select</button></div>
    </section>
    <footer><svg><use href="#info"/></svg><button type="button">OK</button><button type="button" class="cancel">Cancel</button></footer>
  </form>
</div>
</main>
</body>
</html>
```
FILE: styles.css
```css
* { box-sizing: border-box; }
body { margin: 0; background: #fff; color: #3c3c3c; font: 12px/16px "Noto Sans", "Open Sans", sans-serif; }
button, input, select { font: inherit; color: inherit; margin: 0; }
button { background: none; border: 0; padding: 0; }
h2, h3, p, ul { margin: 0; padding: 0; font-size: 12px; font-weight: 400; }
svg { display: block; flex: none; }
i { font-style: normal; }
.defs { display: none; }
.g-letter { fill: #2b96ea; font-weight: 700; }
.caret { flex: none; width: 0; height: 0; border: 3px solid transparent; border-top: 4px solid #777; border-bottom: 0; }

/* application window */
.app { border: 1px solid #a9a9a9; border-radius: 8px; overflow: hidden; background: #fff; }
.titlebar { display: flex; align-items: center; height: 31px; padding: 0 19px 0 9px; background: #f3f3f3; color: #8c8c8c; font-family: "Open Sans", sans-serif; }
.logo { width: 16px; height: 18px; margin-right: 6px; }
.winbtns { display: flex; gap: 36px; margin-left: auto; }
.winbtns svg { width: 11px; height: 11px; }

.tabbar { display: flex; height: 33px; background: #d9d9d9; }
.quick { display: flex; align-items: center; width: 237px; padding-left: 9px; }
.withcaret { display: flex; align-items: center; gap: 6px; }
.dim .caret { border-top-color: #a0a0a0; }
.q-file { margin-left: 20px; }
.q-save { margin-left: 18px; }
.q-undo { margin-left: 20px; }
.q-redo { margin-left: 12px; }
.q-home { margin: 6px 0 0 22px; }
.doctab { flex: 1; display: flex; align-items: center; margin-top: 4px; padding: 2px 6px 0 0; background: #f4f4f4; border-radius: 4px 4px 0 0; }
.docname { flex: 1; display: flex; justify-content: center; align-items: center; gap: 3px; font-family: "Liberation Sans", Arial, sans-serif; }
.account { display: flex; align-items: center; width: 279px; padding-left: 21px; }
.a-ext { margin: 0 11px 0 29px; }
.a-plug { display: grid; place-items: center; align-self: stretch; width: 34px; background: #009fe8; }
.a-clock { margin-left: 8px; }
.a-bell { margin-left: 19px; }
.a-help { margin-left: 20px; }
.a-user { margin-left: 23px; }

.ribbon { display: flex; height: 89px; background: #f4f4f4; }
.workspace { display: flex; align-items: center; justify-content: center; gap: 8px; width: 118px; height: 63px; margin: 12px 0 0 12px; border: 1px solid #cfcfcf; border-radius: 4px; font-weight: 600; color: #444; }
.ribbonmain { flex: 1; min-width: 0; }
.modes { display: flex; gap: 24px; height: 27px; padding-left: 14px; }
.modes a { padding: 5px 13px 0; border-bottom: 4px solid transparent; color: #555; text-decoration: none; }
.modes .on { padding: 5px 11px 0; font-weight: 600; color: #3c3c3c; border-bottom-color: #4a4a4a; }
.groups { display: flex; justify-content: space-between; height: 54px; margin-top: 1px; padding-right: 2px; }
.group { flex: none; display: flex; flex-direction: column; align-items: center; padding: 1px 10px 0; border-right: 2px solid #dedede; }
.group.first { padding-left: 11px; }
.group.wide { padding: 1px 13px 0; }
.group:last-child { border-right: 0; }
.icons { display: flex; gap: 11px; height: 34px; }
.icons svg { width: 34px; height: 34px; }
.group button { display: flex; align-items: center; gap: 4px; margin-top: 4px; color: #555; line-height: 16px; }
.picked { width: 42px; height: 42px; margin-top: -4px; padding: 4px; background: #dcedf6; border: 1px solid #a5d8ef; border-radius: 2px; }
.picked svg { width: 32px; height: 32px; }

/* modelling canvas */
.canvas { display: flex; flex-direction: column; }
.stage { display: grid; grid-template-columns: 312px 1fr 197px; padding-left: 4px; min-height: 550px; align-items: start; }
.bar { display: flex; align-items: center; height: 27px; padding: 0 12px 0 6px; border: 1px solid #dedede; background: #f4f4f4; color: #555; }
.bar span { margin-left: 13px; }
.bar button { margin-left: auto; }
.browser { padding-top: 4px; }
.tree { list-style: none; padding: 2px 0 0 16px; }
.tree li { display: flex; align-items: center; height: 25px; }
.l1 { padding-left: 19px; }
.l2 { padding-left: 38px; }
.l3 { padding-left: 57px; }
.chev { width: 6px; height: 6px; margin: 0 14px 0 2px; border: solid #666; border-width: 1px 1px 0 0; rotate: 45deg; }
.chev.down { margin: 0 12px 0 4px; rotate: 135deg; }
.chev.none { visibility: hidden; }
.node { display: flex; align-items: center; gap: 10px; height: 21px; padding: 0 14px 0 3px; background: #f4f4f4; white-space: nowrap; }
.node svg { width: 16px; height: 16px; }
.node b { margin-left: 5px; font-weight: 400; color: #555; }
.node .strong { font-weight: 600; color: #3c3c3c; }
.hot { height: 21px; margin: 0 -5px; padding: 3px 5px; background: #e6e6e6; }
.selected { display: flex; align-items: center; gap: 10px; height: 23px; margin: 0 -14px 0 -4px; padding: 0 9px 0 3px; border: 1px solid #5dbbe8; background: #dceaf4; }
.scene { justify-self: center; width: 337px; height: 522px; }
.axis { font-size: 34px; }
.viewcube { justify-self: end; width: 70px; height: 85px; margin: 14px 14px 0 0; }
.cubetext { font-size: 20px; fill: #888; text-anchor: middle; }
.cubeaxis { font-size: 28px; }

.dock { display: grid; grid-template-columns: 312px 1fr 315px; height: 30px; padding-left: 4px; align-items: start; }
.comments span { margin-left: 22px; }
.navbar { display: flex; justify-self: center; align-items: center; gap: 5px; height: 25px; padding: 0 6px; background: #f4f4f4; }
.navbar button { display: flex; align-items: center; justify-content: center; gap: 4px; min-width: 23px; }
.navbar svg { width: 17px; height: 17px; }
.status { padding: 6px 18px 0 0; text-align: right; font-weight: 600; white-space: nowrap; }

/* operation dialogs */
.panels { display: grid; grid-template-columns: repeat(5, 1fr); align-items: start; }
.panel { min-width: 0; border: 1px solid #dedede; background: #f4f4f4; }
.panel h2 { display: flex; align-items: center; gap: 14px; height: 24px; padding: 2px 0 0 5px; border-bottom: 1px solid #dedede; color: #555; }
.panel h2::before { content: ""; width: 8px; height: 2px; margin-top: -4px; background: #777; }
.tabs { display: flex; height: 29px; margin-bottom: 1px; padding-top: 2px; border-bottom: 2px solid #c6c6c6; }
.tabs button { display: grid; place-items: center; width: 29px; height: 25px; border-right: 1px solid #bdbdbd; }
.tabs .on { height: 27px; padding-bottom: 2px; background: #f4f4f4; border-top: 1px solid #bdbdbd; box-shadow: -1px 0 #bdbdbd; }
.tabs svg { width: 18px; height: 18px; }
.panel section { display: flow-root; position: relative; }
.panel section + section { margin-top: 10px; }
.panel section + section::before { content: ""; position: absolute; left: 1px; right: 13px; top: -5px; height: 1px; background: #dedede; }
.panel h3 { display: flex; align-items: center; height: 30px; padding-left: 11px; font-weight: 600; }
.panel h3.open::before { content: ""; width: 0; height: 0; margin: 0 6px 0 -2px; border: 5px solid transparent; border-top: 6px solid #777; border-bottom: 0; }
.panel h3 label { display: flex; align-items: center; gap: 7px; }
.panel h3.open label { margin-left: 1px; }
.covered { position: relative; }
.tooltip { position: absolute; left: 65px; top: 3px; width: 75px; height: 24px; border-radius: 12px; background: #505050; color: #fff; line-height: 24px; text-align: center; }

.row { display: grid; grid-template-columns: 108px 1fr; column-gap: 5px; align-items: center; height: 30px; padding: 0 31px 0 12px; }
.heights .row { grid-template-columns: 47px 1fr; }
.row > span:first-child, .row > label { overflow: hidden; text-overflow: ellipsis; white-space: nowrap; }
input[type=text] { width: calc(100% - 2px); min-width: 0; height: 26px; margin-left: 1px; padding: 0 0 2px 2px; border: 1px solid #e0e0e0; border-radius: 0; background: #fff; }
input[type=checkbox] { appearance: none; width: 12px; height: 12px; margin: 0; border: 1px solid #b5b5b5; background: #fff; }
.row input[type=checkbox] { margin-left: 6px; }
input[type=checkbox]:checked { display: grid; place-items: center; border-color: #777; background: #777; }
input[type=checkbox]:checked::before { content: ""; width: 7px; height: 4px; margin-top: -2px; border: solid #fff; border-width: 0 0 2px 2px; rotate: -45deg; }

.combo { display: flex; align-items: center; min-width: 0; height: 28px; padding: 0 6px 0 3px; border: 1px solid #dcdcdc; border-radius: 2px; background: #fff; }
.combo svg { width: 18px; height: 18px; margin-right: 2px; }
.combo select { flex: 1; min-width: 0; height: 26px; padding: 0; border: 0; appearance: none; background: transparent; text-overflow: ellipsis; overflow: hidden; white-space: nowrap; }
.combo::after { content: ""; flex: none; margin-left: 2px; border: 3px solid transparent; border-top: 4px solid #777; border-bottom: 0; }
.combo.pad { padding-left: 8px; }
.toolrow { display: flex; align-items: center; height: 34px; padding: 4px 0 0 14px; }
.toolrow span { width: 60px; }
.btn { height: 28px; padding: 0 3px; border: 1px solid #cdcdcd; background: #f4f4f4; white-space: nowrap; }
.toolrow .btn { padding: 0 4px; }
.toolrow .btn + .btn { margin-left: 12px; }
.toolpick { height: 35px; padding: 0 37px 0 10px; }
.toolpick .combo { padding-left: 7px; }
.pick { display: flex; align-items: center; justify-self: start; gap: 4px; padding: 0 6px; }
.pick svg { width: 12px; height: 18px; }
.pick.on { background: #dcecf6; border-color: #5dbbe8; }
.pickline { display: flex; align-items: center; gap: 12px; }
.list { margin: 5px 31px 5px 9px; border: 1px solid #e8e8e8; background: #fff; }
.list svg { width: 17px; height: 17px; }
.item { display: flex; align-items: center; gap: 7px; height: 28px; padding-left: 9px; border: 1px solid #d0eaf7; background: #dff0f9; }
.tools { display: flex; align-items: center; gap: 9px; height: 30px; padding-left: 5px; }
.tools .caret { margin: 0 9px 0 6px; }
.tools .x { width: 10px; height: 10px; margin-right: 3px; }
.spin { display: flex; height: 26px; margin: 0 1px; border: 1px solid #e0e0e0; background: #fff; }
.spin input[type=text] { flex: 1; width: 0; height: 24px; margin: 0; border: 0; }
.arrows { display: flex; flex-direction: column; width: 13px; border: solid #ccc; border-width: 1px 0 1px 1px; }
.arrows button { flex: 1; display: grid; place-items: center; }
.arrows button + button { border-top: 1px solid #ccc; }
.up, .dn { width: 0; height: 0; border: 2px solid transparent; }
.up { border-bottom: 3px solid #666; border-top: 0; }
.dn { border-top: 3px solid #666; border-bottom: 0; }

.panel footer { display: flex; align-items: center; height: 36px; padding: 0 13px 0 7px; border-top: 1px solid #dedede; }
.panel footer svg { width: 14px; height: 14px; margin-right: auto; }
.panel footer button { width: 42px; height: 24px; border: 1px solid #b5b5b5; border-radius: 2px; }
.panel footer .cancel { width: 64px; margin-left: 14px; }
```
